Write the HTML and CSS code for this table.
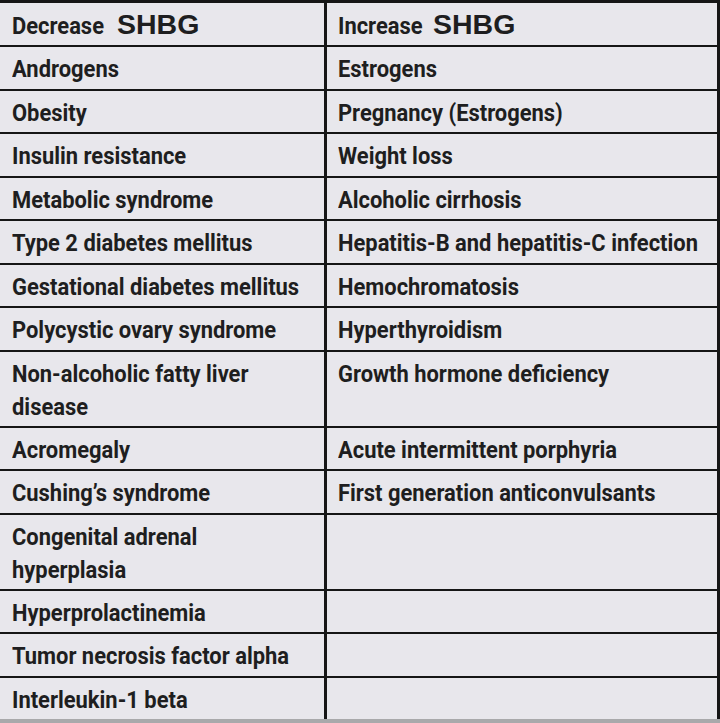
FILE: index.html
```html
<!DOCTYPE html>
<html>
<head>
<meta charset="utf-8">
<link rel="stylesheet" href="styles.css">
</head>
<body>
<div class="shbg">
  <div class="cell head"><span class="hw">Decrease</span><span class="abbr">SHBG</span></div>
  <div class="cell head"><span class="hw">Increase</span><span class="abbr">SHBG</span></div>

  <div class="cell"><span class="t">Androgens</span></div>
  <div class="cell"><span class="t">Estrogens</span></div>

  <div class="cell"><span class="t">Obesity</span></div>
  <div class="cell"><span class="t">Pregnancy (Estrogens)</span></div>

  <div class="cell"><span class="t">Insulin resistance</span></div>
  <div class="cell"><span class="t">Weight loss</span></div>

  <div class="cell"><span class="t">Metabolic syndrome</span></div>
  <div class="cell"><span class="t">Alcoholic cirrhosis</span></div>

  <div class="cell"><span class="t">Type 2 diabetes mellitus</span></div>
  <div class="cell"><span class="t">Hepatitis-B and hepatitis-C infection</span></div>

  <div class="cell"><span class="t">Gestational diabetes mellitus</span></div>
  <div class="cell"><span class="t">Hemochromatosis</span></div>

  <div class="cell"><span class="t">Polycystic ovary syndrome</span></div>
  <div class="cell"><span class="t">Hyperthyroidism</span></div>

  <div class="cell tall"><span class="t">Non-alcoholic fatty liver<br>disease</span></div>
  <div class="cell tall"><span class="t">Growth hormone deficiency</span></div>

  <div class="cell"><span class="t">Acromegaly</span></div>
  <div class="cell"><span class="t">Acute intermittent porphyria</span></div>

  <div class="cell"><span class="t">Cushing’s syndrome</span></div>
  <div class="cell"><span class="t">First generation anticonvulsants</span></div>

  <div class="cell tall"><span class="t">Congenital adrenal<br>hyperplasia</span></div>
  <div class="cell tall"></div>

  <div class="cell"><span class="t">Hyperprolactinemia</span></div>
  <div class="cell"></div>

  <div class="cell"><span class="t">Tumor necrosis factor alpha</span></div>
  <div class="cell"></div>

  <div class="cell"><span class="t">Interleukin-1 beta</span></div>
  <div class="cell"></div>
</div>
</body>
</html>
```
FILE: styles.css
```css
html, body {
  margin: 0;
  padding: 0;
  background: #a9a9ab;
}
.shbg {
  width: 720px;
  box-sizing: border-box;
  display: grid;
  grid-template-columns: 324px 390px;
  grid-auto-rows: auto;
  column-gap: 3px;
  row-gap: 2px;
  padding: 3px 3px 0 0;
  background: #161616;
  font-family: Roboto, "Liberation Sans", sans-serif;
  font-weight: 700;
  font-size: 24px;
  color: #1e1e20;
}
.cell {
  box-sizing: border-box;
  height: 41.5px;
  background: #e8e7ec;
  padding: 6px 0 0 12px;
  line-height: 33px;
  overflow: visible;
  white-space: nowrap;
}
.cell:nth-child(even) {
  padding-left: 11px;
}
.cell.head {
  height: 42px;
  padding-top: 5px;
  display: flex;
  align-items: baseline;
}
.cell.tall {
  height: 74px;
}
.t, .hw {
  display: inline-block;
  transform: scaleX(0.913);
  transform-origin: left center;
}
.hw {
  width: 105px;
}
.cell:nth-child(2) .hw {
  width: 95px;
}
.abbr {
  font-family: "Liberation Sans", Arial, sans-serif;
  font-weight: 700;
  font-size: 28.5px;
}
```
